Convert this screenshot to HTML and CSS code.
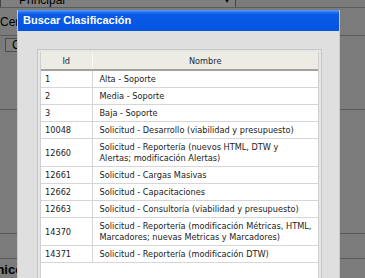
FILE: index.html
```html
<!DOCTYPE html>
<html lang="es">
<head>
<meta charset="utf-8">
<title>Buscar Clasificación</title>
<link rel="stylesheet" href="styles.css">
</head>
<body>
<div class="page">
  <div class="bg">
    <div class="bg-top"><div class="select"><span class="sel-text">Principal</span><span class="arrow">&#9660;</span></div></div>
    <div class="bg-row r1"><span class="lbl">Centro</span></div>
    <div class="bg-row r2"><span class="btn">Cargar</span></div>
    <div class="bg-row r3"></div>
    <div class="bg-row r4"></div>
    <div class="bg-row r5"></div>
    <div class="bg-row r6"><span class="tec">Técnico</span></div>
  </div>
  <div class="overlay"></div>
  <div class="dialog">
    <div class="titlebar">Buscar Clasificación</div>
    <div class="dlg-body">
      <div class="frame">
        <div class="scroll">
          <table class="grid">
            <colgroup><col class="col-id"><col class="col-name"></colgroup>
            <thead>
              <tr><th class="c-id">Id</th><th class="c-name">Nombre</th></tr>
            </thead>
            <tbody>
              <tr><td class="c-id">1</td><td class="c-name">Alta - Soporte</td></tr>
              <tr><td class="c-id">2</td><td class="c-name">Media - Soporte</td></tr>
              <tr><td class="c-id">3</td><td class="c-name">Baja - Soporte</td></tr>
              <tr><td class="c-id">10048</td><td class="c-name">Solicitud - Desarrollo (viabilidad y presupuesto)</td></tr>
              <tr><td class="c-id">12660</td><td class="c-name">Solicitud - Reportería (nuevos HTML, DTW y<br>Alertas; modificación Alertas)</td></tr>
              <tr><td class="c-id">12661</td><td class="c-name">Solicitud - Cargas Masivas</td></tr>
              <tr><td class="c-id">12662</td><td class="c-name">Solicitud - Capacitaciones</td></tr>
              <tr><td class="c-id">12663</td><td class="c-name">Solicitud - Consultoría (viabilidad y presupuesto)</td></tr>
              <tr><td class="c-id">14370</td><td class="c-name">Solicitud - Reportería (modificación Métricas, HTML,<br>Marcadores; nuevas Metricas y Marcadores)</td></tr>
              <tr><td class="c-id">14371</td><td class="c-name">Solicitud - Reportería (modificación DTW)</td></tr>
            </tbody>
          </table>
        </div>
      </div>
    </div>
  </div>
</div>
</body>
</html>
```

FILE: styles.css
```css
html, body {
  margin: 0;
  padding: 0;
}
body {
  font-family: "Liberation Sans", Arial, sans-serif;
  background: #7b7b7b;
}
.page {
  position: relative;
  width: 365px;
  height: 278px;
  overflow: hidden;
  background: #f6f6f6;
}

/* background page (dimmed by overlay) */
.bg {
  display: flex;
  flex-direction: column;
}
.bg-top {
  height: 7px;
  border-bottom: 1px solid #b8b8b8;
  overflow: hidden;
}
.select {
  display: flex;
  align-items: center;
  justify-content: space-between;
  width: 212px;
  height: 16px;
  margin-top: -9px;
  padding: 0 4px 0 18px;
  background: #ffffff;
  border: 1px solid #8a8a8a;
  font-size: 12px;
  color: #000;
}
.arrow {
  font-size: 8px;
}
.bg-row {
  border-bottom: 1px solid #b4b4b4;
  display: flex;
  align-items: center;
  font-size: 12px;
  color: #000;
}
.r1 {
  height: 27px;
}
.r2 {
  height: 73px;
  align-items: flex-start;
}
.r3 {
  height: 123px;
}
.r4 {
  height: 24px;
}
.r5 {
  height: 1px;
  border-bottom: none;
}
.r6 {
  height: 18px;
}
.lbl {
  white-space: nowrap;
}
.btn {
  margin: 2px 0 0 5px;
  height: 12px;
  padding: 0 6px;
  line-height: 12px;
  border: 1px solid #9a9a9a;
  background: #ffffff;
  font-size: 12px;
}
.tec {
  font-weight: bold;
  font-size: 13px;
  margin-left: -26px;
  white-space: nowrap;
}

.overlay {
  position: absolute;
  inset: 0;
  background: rgba(0, 0, 0, 0.5);
}

/* dialog */
.dialog {
  position: absolute;
  left: 17px;
  top: 10px;
  width: 321px;
  height: 290px;
  background: #dfdfdf;
  border: 1px solid #c9c9c9;
  border-top: none;
}
.titlebar {
  height: 21px;
  line-height: 21px;
  padding-left: 5px;
  color: #ffffff;
  font-weight: bold;
  font-size: 11px;
  background: linear-gradient(to bottom, #5b9ef6 0px, #2d78ee 2px, #0a5be6 4px, #0055e2 100%);
  white-space: nowrap;
}
.dlg-body {
  padding: 18px 0 0 19px;
}
.frame {
  width: 279px;
  height: 260px;
  padding: 2px;
  border: 1px solid #c6c6c6;
  background: #e6e6e6;
}
.scroll {
  height: 100%;
  box-sizing: border-box;
  border: 1px solid #cfcfcf;
  border-top: none;
  background: #ffffff;
}
.grid {
  width: 100%;
  table-layout: fixed;
  border-collapse: collapse;
  font-family: "DejaVu Sans", Verdana, sans-serif;
  font-size: 8.2px;
  color: #222;
}
.col-id {
  width: 51px;
}
.grid th {
  height: 17px;
  padding: 0;
  font-weight: normal;
  background: #ecebe4;
  border-bottom: 2px solid #a4a39b;
  color: #1e2a3a;
  text-align: center;
}
.grid th.c-id {
  border-right: 1px solid #f8f8f4;
}
.grid td {
  padding: 3px 2px 2px 7px;
  line-height: 11px;
  border-bottom: 1px solid #d6d6d6;
  white-space: nowrap;
  overflow: hidden;
  vertical-align: middle;
}
.grid td.c-id {
  padding-left: 4px;
  border-right: 1px solid #d6d6d6;
}
```
